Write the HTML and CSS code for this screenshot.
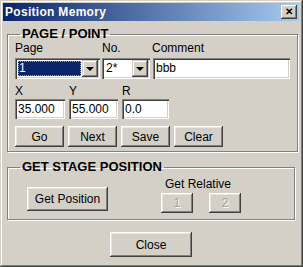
FILE: index.html
```html
<!DOCTYPE html>
<html lang="en">
<head>
  <meta charset="UTF-8">
  <title>Position Memory</title>
  <link rel="stylesheet" href="styles.css">
</head>
<body>
  <div class="window">
    <div class="titlebar">
      <span class="title">Position Memory</span>
      <span class="close-x">&#x2715;</span>
    </div>

    <div class="content">
      <fieldset class="group point">
        <legend>PAGE / POINT</legend>
        <div class="page-row">
          <div class="field">
            <label>Page</label>
            <div class="combo combo-page focused">
              <div class="combo-value"><span>1</span></div>
              <div class="combo-btn"><i></i></div>
            </div>
          </div>
          <div class="field">
            <label>No.</label>
            <div class="combo combo-no">
              <div class="combo-value"><span>2*</span></div>
              <div class="combo-btn"><i></i></div>
            </div>
          </div>
          <div class="field">
            <label>Comment</label>
            <div class="text-box comment">bbb</div>
          </div>
        </div>

        <div class="coord-row">
          <div class="field">
            <label>X</label>
            <div class="text-box coord-x">35.000</div>
          </div>
          <div class="field">
            <label>Y</label>
            <div class="text-box coord-y">55.000</div>
          </div>
          <div class="field">
            <label>R</label>
            <div class="text-box coord-r">0.0</div>
          </div>
        </div>

        <div class="button-row">
          <button class="btn small">Go</button>
          <button class="btn small">Next</button>
          <button class="btn small">Save</button>
          <button class="btn small">Clear</button>
        </div>
      </fieldset>

      <fieldset class="group stage">
        <legend>GET STAGE POSITION</legend>
        <div class="stage-row">
          <button class="btn get-pos">Get Position</button>
          <div class="relative">
            <span class="relative-label">Get Relative</span>
            <div class="relative-btns">
              <button class="btn tiny" disabled>1</button>
              <button class="btn tiny" disabled>2</button>
            </div>
          </div>
        </div>
      </fieldset>

      <div class="footer-row">
        <button class="btn close-btn">Close</button>
      </div>
    </div>
  </div>
</body>
</html>
```

FILE: styles.css
```css
body {
  margin: 0;
  padding: 0;
  background-color: #d4d0c8;
  font-family: "Liberation Sans", Arial, sans-serif;
  font-size: 12px;
  color: #000;
}
.window {
  width: 303px;
  height: 267px;
  box-sizing: border-box;
  padding: 3px 4px 4px 3px;
  background-color: #d4d0c8;
  box-shadow: inset -1px -1px #404040, inset 1px 1px #d4d0c8, inset -2px -2px #808080, inset 2px 2px #fff;
}
.titlebar {
  height: 18px;
  display: flex;
  align-items: center;
  justify-content: space-between;
  padding: 0 2px 0 2px;
  background: linear-gradient(to right, #0a246a, #a6caf0);
}
.title {
  color: #fff;
  font-weight: bold;
  font-size: 12px;
  letter-spacing: 0.3px;
}
.close-x {
  width: 16px;
  height: 14px;
  box-sizing: border-box;
  background-color: #d4d0c8;
  box-shadow: inset -1px -1px #404040, inset 1px 1px #fff, inset -2px -2px #808080;
  font-size: 10px;
  font-weight: bold;
  line-height: 13px;
  text-align: center;
  color: #000;
}
.content {
  padding: 6px 4px 0 4px;
}
.group {
  margin: 0;
  padding: 0 7px 4px 7px;
  border: 1px solid #808080;
  box-shadow: 1px 1px #fff, inset 1px 1px #fff;
}
.group legend {
  padding: 0 2px;
  margin-left: 5px;
  font-size: 13px;
  font-weight: bold;
  line-height: 14px;
}
.field {
  display: flex;
  flex-direction: column;
}
.field label {
  line-height: 14px;
}
.page-row {
  display: flex;
  gap: 2px;
}
.page-row label {
  margin-bottom: 3px;
}
.combo {
  height: 21px;
  display: flex;
  box-sizing: border-box;
  padding: 2px;
  background-color: #fff;
  box-shadow: inset 1px 1px #808080, inset 2px 2px #404040, inset -1px -1px #fff, inset -2px -2px #d4d0c8;
}
.combo-page { width: 85px; }
.combo-no { width: 48px; }
.combo-value {
  flex: 1;
  padding: 1px;
  line-height: 15px;
}
.combo-value span {
  display: block;
  height: 100%;
  padding-left: 1px;
}
.focused .combo-value span {
  background-color: #0a246a;
  color: #fff;
  outline: 1px dotted #c0a060;
  outline-offset: -1px;
}
.combo-btn {
  width: 16px;
  box-sizing: border-box;
  background-color: #d4d0c8;
  box-shadow: inset -1px -1px #404040, inset 1px 1px #d4d0c8, inset -2px -2px #808080, inset 2px 2px #fff;
  display: flex;
  align-items: center;
  justify-content: center;
}
.combo-btn i {
  width: 0;
  height: 0;
  border-left: 4px solid transparent;
  border-right: 4px solid transparent;
  border-top: 4px solid #000;
  margin-left: -1px;
}
.text-box {
  height: 20px;
  box-sizing: border-box;
  padding: 3px 3px;
  line-height: 14px;
  background-color: #fff;
  box-shadow: inset 1px 1px #808080, inset 2px 2px #404040, inset -1px -1px #fff, inset -2px -2px #d4d0c8;
}
.comment {
  width: 137px;
  height: 21px;
  margin-left: 1px;
}
.coord-row {
  display: flex;
  gap: 4px;
  margin-top: 5px;
}
.coord-row label {
  margin-bottom: 1px;
}
.coord-x { width: 50px; }
.coord-y { width: 49px; }
.coord-r { width: 47px; }
.button-row {
  display: flex;
  gap: 4px;
  margin-top: 7px;
}
.btn {
  font-family: "Liberation Sans", Arial, sans-serif;
  font-size: 12px;
  color: #000;
  background-color: #d4d0c8;
  border: none;
  padding: 0;
  box-shadow: inset -1px -1px #404040, inset 1px 1px #fff, inset -2px -2px #808080, inset 2px 2px #e8e6e1;
}
.btn.small {
  width: 49px;
  height: 21px;
}
.btn:disabled {
  color: #a0a0a0;
  text-shadow: 1px 1px #fff;
}
.stage {
  margin-top: 8px;
  padding-bottom: 6px;
}
.stage-row {
  display: flex;
  align-items: flex-start;
}
.get-pos {
  width: 81px;
  height: 24px;
  margin: 13px 0 0 12px;
}
.relative {
  display: flex;
  flex-direction: column;
  align-items: flex-start;
  margin-left: 53px;
  margin-top: 3px;
}
.relative-label {
  line-height: 14px;
  margin-left: 4px;
  margin-bottom: 2px;
}
.relative-btns {
  display: flex;
  gap: 16px;
}
.btn.tiny {
  width: 32px;
  height: 20px;
}
.footer-row {
  display: flex;
  justify-content: center;
  margin-top: 12px;
}
.close-btn {
  width: 82px;
  height: 25px;
}
```
